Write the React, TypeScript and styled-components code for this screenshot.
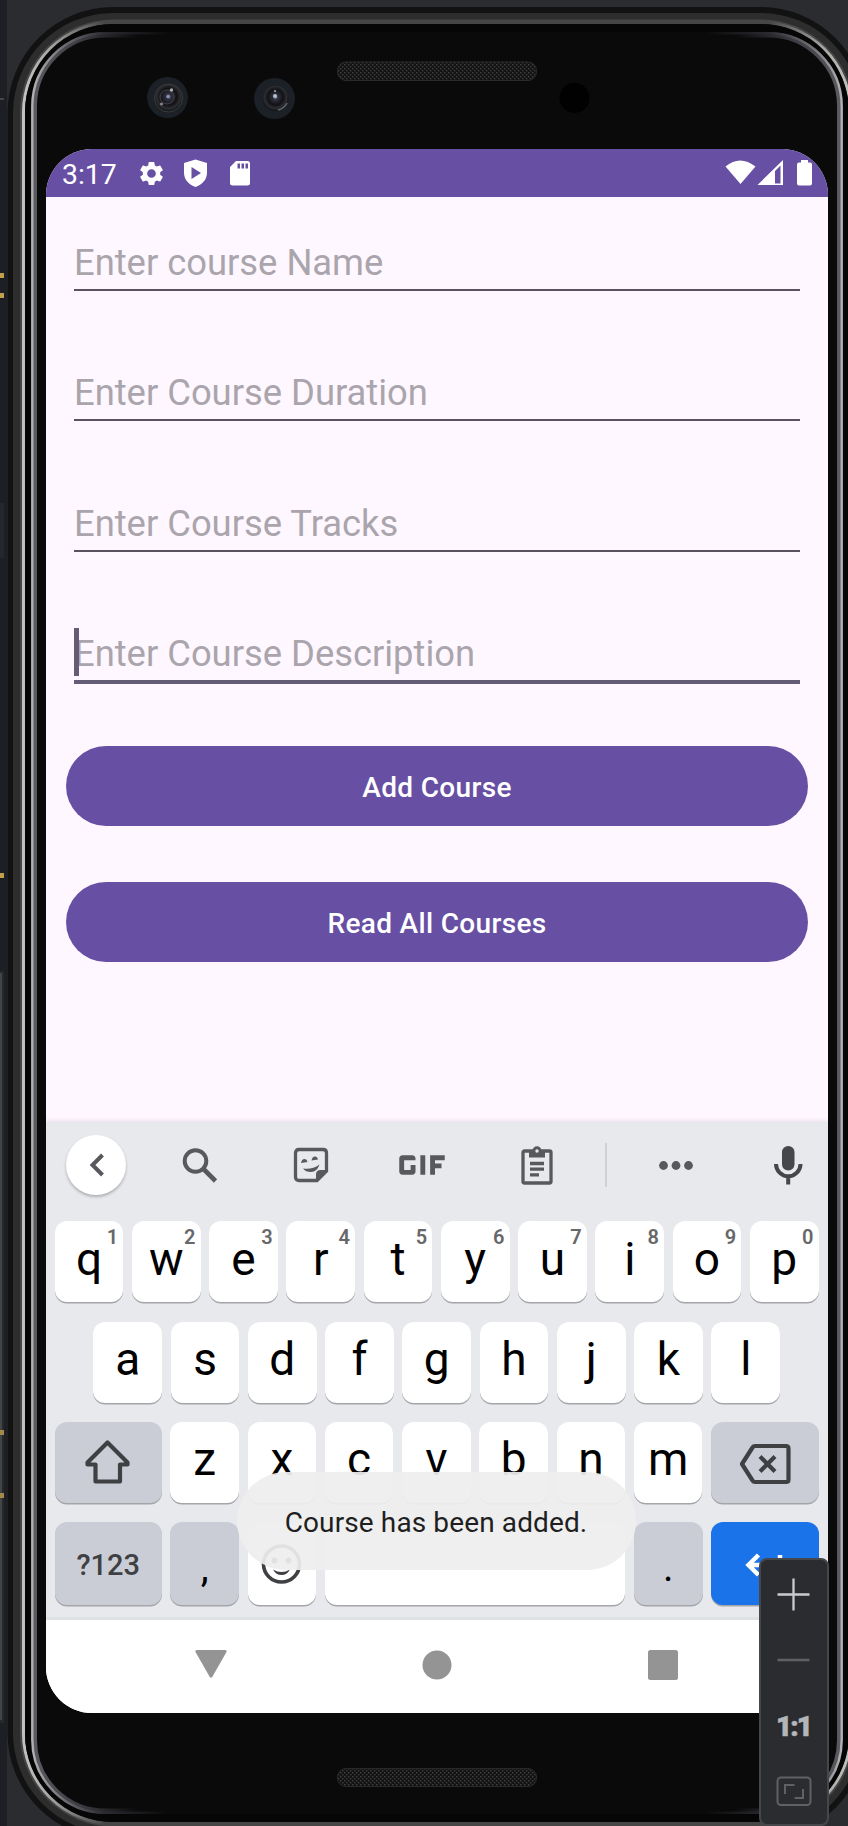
import React from "react";
import styled, { createGlobalStyle } from "styled-components";
import { MdGif, MdSettings } from "react-icons/md";

const GlobalStyle = createGlobalStyle`
  html, body { margin: 0; padding: 0; background: #2b2c30; }
  * { box-sizing: border-box; }
`;

const Stage = styled.div`
  position: relative;
  width: 848px;
  height: 1826px;
  overflow: hidden;
  background: #2b2c30;
  font-family: Roboto, "Liberation Sans", sans-serif;
  display: flex;
`;

const Gutter = styled.div`
  position: relative;
  width: 7px;
  flex: none;
  background: #1e1f24;
`;

const Mark = styled.i<{ $top: number; $height?: number; $color?: string; $width?: number }>`
  position: absolute;
  left: 0;
  top: ${(p) => p.$top}px;
  width: ${(p) => p.$width ?? 4}px;
  height: ${(p) => p.$height ?? 5}px;
  background: ${(p) => p.$color ?? "#c29f4a"};
`;

const BezelArt = styled.svg`
  position: absolute;
  left: 0;
  top: 0;
  display: block;
`;

const Screen = styled.main`
  position: relative;
  width: 782px;
  height: 1564px;
  margin: 149px 0 0 39px;
  flex: none;
  border-radius: 46px;
  overflow: hidden;
  background: #fef7ff;
  display: flex;
  flex-direction: column;
`;

const StatusBar = styled.header`
  height: 48px;
  flex: none;
  padding: 0 15px 0 16px;
  display: flex;
  align-items: center;
  justify-content: space-between;
  background: #674fa3;
  color: #fff;
`;

const StatusGroup = styled.div<{ $gap: number }>`
  display: flex;
  align-items: center;
  gap: ${(p) => p.$gap}px;
  svg { display: block; }
`;

const Clock = styled.span`
  font-size: 28.4px;
  line-height: 34px;
  width: 60px;
  margin-top: 3px;
`;

const Form = styled.section`
  flex: 1;
  padding: 44.5px 20px 0;
`;

const Field = styled.div<{ $focused?: boolean }>`
  position: relative;
  margin: 0 8px ${(p) => (p.$focused ? 62 : 81.5)}px;
  height: ${(p) => (p.$focused ? 51 : 49)}px;
  border-bottom: ${(p) => (p.$focused ? "4px solid #645b74" : "2px solid #5a535f")};
  font-size: 36.4px;
  line-height: 42px;
  letter-spacing: -0.02px;
  color: #aaa5ac;
  white-space: nowrap;
`;

const Caret = styled.i`
  position: absolute;
  left: 0;
  top: -5px;
  width: 5px;
  height: 48px;
  background: #645b74;
`;

const PillButton = styled.button`
  display: block;
  width: 742px;
  height: 80px;
  margin: 0 0 56px;
  padding: 4px 0 0;
  border: 0;
  border-radius: 40px;
  background: #674fa3;
  color: #fff;
  font: 500 28px/34px Roboto, "Liberation Sans", sans-serif;
  letter-spacing: 0.33px;
`;

const Keyboard = styled.section`
  height: 497.5px;
  flex: none;
  padding: 0 9px 0 8.7px;
  background: #e8e9ed;
  border-bottom: 3px solid #e0e1e4;
  box-shadow: 0 -1px 4px rgba(90, 60, 90, 0.14);
`;

const Suggestions = styled.div`
  display: grid;
  grid-template-columns: 100.5px 107px 114px 108px 122px 16px 125px 99px;
  height: 86px;
  margin: 0 -9px 13.3px -8.7px;
  align-items: center;
  justify-items: center;
  svg { display: block; }
`;

const RoundButton = styled.div`
  width: 60px;
  height: 60px;
  border-radius: 50%;
  background: #fff;
  box-shadow: 0 2px 3px rgba(0, 0, 0, 0.25);
  display: grid;
  place-items: center;
`;

const Divider = styled.i`
  width: 2px;
  height: 44px;
  background: #cfd1d5;
`;

const KeyRow = styled.div<{ $inset?: number; $tall?: boolean }>`
  display: flex;
  gap: 8.7px;
  height: ${(p) => (p.$tall ? 83.3 : 81)}px;
  margin-bottom: 19.3px;
  padding: 0 ${(p) => p.$inset ?? 0}px;
`;

const Key = styled.div<{ $width?: number; $tone?: "grey" | "blue"; $size?: number; $drop?: number }>`
  position: relative;
  width: ${(p) => p.$width ?? 68.57}px;
  flex: none;
  border-radius: 12px;
  display: flex;
  align-items: center;
  justify-content: center;
  padding-top: ${(p) => p.$drop ?? 0}px;
  background: ${(p) => (p.$tone === "grey" ? "#cbcdd6" : p.$tone === "blue" ? "#1a73e8" : "#fff")};
  box-shadow: 0 1.5px 0.5px #a5a6a9;
  font-size: ${(p) => p.$size ?? 46}px;
  line-height: 54px;
  color: #000;
  svg { display: block; }
`;

const Letter = styled.span`
  margin-top: -6px;
`;

const Hint = styled.sup`
  position: absolute;
  right: 5px;
  top: 3.5px;
  font-size: 20px;
  line-height: 24px;
  font-weight: 600;
  color: #67686a;
`;

const ModeLabel = styled.span`
  font-size: 29px;
  font-weight: 500;
  line-height: 34px;
  margin-top: 2px;
  color: #3f4043;
`;

const NavBar = styled.nav`
  height: 93.5px;
  flex: none;
  background: #fff;
  display: grid;
  grid-template-columns: 226px 226px 225px;
  align-items: center;
  justify-items: center;
  padding: 0 0 2px 52px;
`;

const Toast = styled.div`
  position: absolute;
  left: 190.5px;
  top: 1323px;
  width: 399px;
  height: 98px;
  border-radius: 49px;
  background: rgba(238, 238, 238, 0.93);
  display: flex;
  align-items: center;
  justify-content: center;
  padding-top: 3px;
  font-size: 28px;
  line-height: 34px;
  letter-spacing: 0.12px;
  white-space: nowrap;
  color: #1f1f1f;
`;

const ZoomPanel = styled.aside`
  position: absolute;
  left: 759px;
  top: 1558px;
  width: 70px;
  height: 268px;
  border: 2px solid #46474a;
  border-radius: 8px;
  background: #2b2c30;
  display: grid;
  grid-template-rows: 68px 64px 68px 62px;
  align-items: center;
  justify-items: center;
  padding-right: 1px;
  svg { display: block; }
`;

const Ratio = styled.span`
  font-size: 28px;
  line-height: 30px;
  font-weight: 900;
  letter-spacing: -2px;
  -webkit-text-stroke: 0.6px #b4b6ba;
  color: #b4b6ba;
  margin-top: 1px;
`;

function Bezel() {
  return (
    <BezelArt width="848" height="1826" viewBox="0 0 848 1826" fill="none">
      <defs>
        <linearGradient id="rim" gradientUnits="userSpaceOnUse" x1="22" x2="852" y1="0" y2="0">
          <stop offset="0" stopColor="#c4c3c0" />
          <stop offset="0.03" stopColor="#aaa9a6" />
          <stop offset="0.1" stopColor="#464646" />
          <stop offset="0.9" stopColor="#464646" />
          <stop offset="0.97" stopColor="#aaa9a6" />
          <stop offset="1" stopColor="#c4c3c0" />
        </linearGradient>
        <linearGradient id="glass" gradientUnits="userSpaceOnUse" x1="31" x2="843" y1="0" y2="0">
          <stop offset="0" stopColor="#b4b4b4" />
          <stop offset="0.035" stopColor="#77767a" />
          <stop offset="0.09" stopColor="#2c2b32" />
          <stop offset="0.17" stopColor="#0a0a0a" />
          <stop offset="0.83" stopColor="#0a0a0a" />
          <stop offset="0.91" stopColor="#2c2b32" />
          <stop offset="0.965" stopColor="#77767a" />
          <stop offset="1" stopColor="#b4b4b4" />
        </linearGradient>
        <linearGradient id="glassIn" gradientUnits="userSpaceOnUse" x1="33" x2="841" y1="0" y2="0">
          <stop offset="0" stopColor="#5b5b62" />
          <stop offset="0.06" stopColor="#3c3b42" />
          <stop offset="0.13" stopColor="#0a0a0a" />
          <stop offset="0.87" stopColor="#0a0a0a" />
          <stop offset="0.94" stopColor="#3c3b42" />
          <stop offset="1" stopColor="#5b5b62" />
        </linearGradient>
        <pattern id="mesh" width="4" height="4" patternUnits="userSpaceOnUse">
          <rect width="4" height="4" fill="#131313" />
          <rect width="1.400" height="1.400" fill="#424242" />
          <rect x="2" y="2" width="1.400" height="1.400" fill="#3c3c3c" />
        </pattern>
        <radialGradient id="lens" cx="0.5" cy="0.45" r="0.5">
          <stop offset="0" stopColor="#8088a8" />
          <stop offset="0.2" stopColor="#30303c" />
          <stop offset="0.6" stopColor="#111216" />
          <stop offset="0.85" stopColor="#2e2e31" />
          <stop offset="1" stopColor="#17191d" />
        </radialGradient>
      </defs>
      <rect x="7.5" y="7" width="859" height="1832" rx="106" fill="#121212" />
      <rect x="13" y="13" width="848" height="1820" rx="100" fill="#2d2d2d" />
      <rect x="20" y="19.500" width="834" height="1807" rx="93" fill="#464646" />
      <rect x="23.500" y="22.500" width="827" height="1801" rx="90" stroke="url(#rim)" strokeWidth="3" fill="#0a0a0a" />
      <rect x="25" y="24" width="824" height="1798" rx="88" fill="#060606" />
      <rect x="31" y="32" width="812" height="1782" rx="74" fill="#0a0a0a" />
      <rect x="34.500" y="35" width="805" height="1776" rx="71" stroke="url(#glassIn)" strokeWidth="5" />
      <rect x="32.300" y="33.300" width="809.400" height="1779.400" rx="73" stroke="url(#glass)" strokeWidth="2.400" />
      <rect x="337.500" y="62" width="199" height="18.500" rx="8.500" fill="url(#mesh)" stroke="#2a2a2a" />
      <rect x="337.500" y="1768.500" width="199" height="18" rx="8.500" fill="url(#mesh)" stroke="#2a2a2a" />
      <circle cx="167.500" cy="97.500" r="20.500" fill="#1b2126" />
      <circle cx="168.500" cy="98" r="14" fill="url(#lens)" stroke="#3b3b3d" />
      <circle cx="167" cy="97" r="7" stroke="#45454e" />
      <circle cx="171.500" cy="90" r="1.700" fill="#aaa" />
      <circle cx="168" cy="96.500" r="1.600" fill="#8d93bb" />
      <circle cx="161.500" cy="104" r="1.600" fill="#8b7d88" />
      <circle cx="274.500" cy="98.500" r="20.500" fill="#1b2126" />
      <circle cx="275.500" cy="98.500" r="13" fill="url(#lens)" />
      <circle cx="275" cy="96" r="2" fill="#b5c0d2" />
      <circle cx="275" cy="91" r="1.200" fill="#888" />
      <path d="M278 110a13 13 0 0 0 9-7" stroke="#66666a" strokeWidth="1.500" />
      <circle cx="574.500" cy="98" r="15" fill="#010102" />
    </BezelArt>
  );
}

const ink = "#58595c";

const fields = ["Enter course Name", "Enter Course Duration", "Enter Course Tracks"];

export default function App() {
  return (
    <>
      <GlobalStyle />
      <Stage>
        <Gutter>
          <Mark $top={98} $height={2} $color="#45464a" />
          <Mark $top={273} />
          <Mark $top={293} />
          <Mark $top={503} $height={55} $color="#26272c" />
          <Mark $top={873} />
          <Mark $top={971} $height={752} $color="#27282c" />
          <Mark $top={973} $height={747} $width={2} $color="#434446" />
          <Mark $top={1430} $color="#a3884a" />
          <Mark $top={1493} $color="#a3884a" />
        </Gutter>
        <Bezel />
        <Screen>
          <StatusBar>
            <StatusGroup $gap={15}>
              <Clock>3:17</Clock>
              <MdSettings size={29} />
              <svg width="29" height="30" viewBox="0 0 29 30">
                <path
                  fillRule="evenodd"
                  fill="#fff"
                  d="M14.5 1.5 26 5v10c0 6.500-4.800 11.500-11.500 14C7.800 26.500 3 21.500 3 15V5ZM10.500 9v12L20 15Z"
                />
              </svg>
              <svg width="29" height="30" viewBox="0 0 29 30">
                <path
                  fillRule="evenodd"
                  fill="#fff"
                  d="M11 3h11.500Q25 3 25 5.500v19.500Q25 27.500 22.500 27.500h-15Q5 27.500 5 25V9ZM12.500 5.500v5h2.500v-5ZM16.500 5.500v5h2.500v-5ZM20.500 5.500v5h2.500v-5Z"
                />
              </svg>
            </StatusGroup>
            <svg width="88" height="28" viewBox="0 0 88 28" fill="#fff">
              <path d="M0.500 7.500Q15 -4.500 30.500 7.500L15.500 25Z" />
              <path fillRule="evenodd" d="M58 1v25H32.500ZM50 12v12.500h5.500V6.500Z" />
              <path d="M76 1h7v2.500h2q2 0 2 2v19q0 2-2 2h-11q-2 0-2-2v-19q0-2 2-2h2Z" />
            </svg>
          </StatusBar>

          <Form>
            {fields.map((label) => (
              <Field key={label}>{label}</Field>
            ))}
            <Field $focused>
              <Caret />
              Enter Course Description
            </Field>
            <PillButton>Add Course</PillButton>
            <PillButton>Read All Courses</PillButton>
          </Form>

          <Keyboard>
            <Suggestions>
              <RoundButton>
                <svg width="20" height="26" viewBox="0 0 20 26" fill="none" stroke={ink} strokeWidth="4">
                  <path d="M16.500 3 6.500 13l10 10" />
                </svg>
              </RoundButton>
              <svg width="36" height="36" viewBox="0 0 36 36" fill="none" stroke={ink} strokeWidth="4">
                <circle cx="13.500" cy="14" r="10.800" />
                <path d="m21.500 22 12 12" strokeWidth="4.600" />
              </svg>
              <svg width="36" height="36" viewBox="0 0 36 36" fill="none" stroke={ink} strokeWidth="3.300">
                <path d="M6 2.500h24q3.500 0 3.500 3.500v18L24 33.500H6q-3.500 0-3.500-3.500V6q0-3.500 3.500-3.500Z" />
                <path d="M23 34v-6.500q0-4.500 4.500-4.500H34L23 34Z" fill={ink} stroke="none" />
                <path d="M10 21.500q9 1.500 16.500-4Q24 25 18 25q-5.500 0-8-3.500Z" fill={ink} stroke="none" />
                <path d="M8 16q.8-4 3.500-4 2.300 0 3 3ZM18.500 13.500q.8-4 3.500-4 2.300 0 3 3Z" fill={ink} stroke="none" />
              </svg>
              <MdGif size={78} color={ink} aria-label="GIF" />
              <svg width="32" height="40" viewBox="0 0 32 40" fill="none" stroke={ink} strokeWidth="3.300">
                <rect x="2" y="6" width="28" height="32" rx="1.500" />
                <path d="M8 6h4.500a4 4 0 0 1 7 0H24v6.500H8Z" fill={ink} stroke="none" />
                <circle cx="16" cy="6" r="3.200" fill="#e8e9ed" strokeWidth="3" />
                <path d="M9 18.500h14M9 24.200h14M9 29.900h9" />
              </svg>
              <Divider />
              <svg width="36" height="10" viewBox="0 0 36 10" fill={ink}>
                <circle cx="5.500" cy="5.500" r="4.400" />
                <circle cx="18" cy="5.500" r="4.400" />
                <circle cx="30.500" cy="5.500" r="4.400" />
              </svg>
              <svg width="30" height="40" viewBox="0 0 30 40" fill="none" stroke="#46474a" strokeWidth="4">
                <rect x="9" y="1" width="12.500" height="24.500" rx="6.200" fill="#46474a" stroke="none" />
                <path d="M3 19a12.200 12.200 0 0 0 24.500 0M15.200 31v8.500" />
              </svg>
            </Suggestions>

            <KeyRow>
              {"qwertyuiop".split("").map((c, i) => (
                <Key key={c}>
                  <Letter>{c}</Letter>
                  <Hint>{(i + 1) % 10}</Hint>
                </Key>
              ))}
            </KeyRow>
            <KeyRow $inset={38.8}>
              {"asdfghjkl".split("").map((c) => (
                <Key key={c}>
                  <Letter>{c}</Letter>
                </Key>
              ))}
            </KeyRow>
            <KeyRow>
              <Key $width={107} $tone="grey">
                <svg width="46" height="44" viewBox="0 0 46 44" fill="none" stroke="#3f4043" strokeWidth="4.200" strokeLinejoin="round">
                  <path d="M22.500 2.500 42.500 22.500v2H35v17H10.500v-17h-8v-2Z" />
                </svg>
              </Key>
              {"zxcvbnm".split("").map((c) => (
                <Key key={c}>
                  <Letter>{c}</Letter>
                </Key>
              ))}
              <Key $width={107.5} $tone="grey" $drop={3}>
                <svg width="52" height="42" viewBox="0 0 52 42" fill="none" stroke="#3f4043" strokeWidth="4.200" strokeLinejoin="round">
                  <path d="M16 3h31q2.500 0 2.500 2.500v31Q49.500 39 47 39H16q-1.500 0-2.500-1.500L3 21 13.500 4.500Q14.500 3 16 3Z" />
                  <path d="m21 13.500 15 15m0-15-15 15" />
                </svg>
              </Key>
            </KeyRow>
            <KeyRow $tall>
              <Key $width={107} $tone="grey">
                <ModeLabel>?123</ModeLabel>
              </Key>
              <Key $tone="grey" $size={40} $drop={9}>,</Key>
              <Key>
                <svg width="42" height="42" viewBox="0 0 42 42" fill="none" stroke="#3f4043" strokeWidth="3.600">
                  <circle cx="20.500" cy="21" r="18" />
                  <circle cx="13.500" cy="17.500" r="3" fill="#3f4043" stroke="none" />
                  <circle cx="27.500" cy="17.500" r="3" fill="#3f4043" stroke="none" />
                  <path d="M12 26.500q8.500 5 17 0-3 5.500-8.500 5.500t-8.500-5.500Z" fill="#3f4043" stroke="none" />
                </svg>
              </Key>
              <Key $width={300.5} />
              <Key $tone="grey" $size={40} $drop={9}>.</Key>
              <Key $width={107.5} $tone="blue" $drop={2}>
                <svg width="42" height="30" viewBox="0 0 42 30" fill="none" stroke="#fff" strokeWidth="4.500">
                  <path d="M14.500 5 4.500 15l10 10M5 15h31V5" />
                </svg>
              </Key>
            </KeyRow>
          </Keyboard>

          <NavBar>
            <svg width="34" height="32" viewBox="0 0 34 32" fill="#949494">
              <path d="M3 1h28q2.500 0 1.200 2.500L18.500 27.500q-1.500 2.500-3 0L1.800 3.500Q.5 1 3 1Z" />
            </svg>
            <svg width="30" height="30" viewBox="0 0 30 30" fill="#949494">
              <circle cx="15" cy="15" r="14.500" />
            </svg>
            <svg width="30" height="30" viewBox="0 0 30 30" fill="#949494">
              <rect width="30" height="30" rx="2.500" />
            </svg>
          </NavBar>
          <Toast>Course has been added.</Toast>
        </Screen>

        <ZoomPanel>
          <svg width="33" height="33" viewBox="0 0 33 33" stroke="#c9cbcf" strokeWidth="2.300">
            <path d="M0.500 16.500h32M16.500.5v32" />
          </svg>
          <svg width="33" height="4" viewBox="0 0 33 4" stroke="#5f6164" strokeWidth="2.300">
            <path d="M0.500 2h32" />
          </svg>
          <Ratio>1:1</Ratio>
          <svg width="36" height="30" viewBox="0 0 36 30" fill="none" stroke="#5f6164" strokeWidth="2">
            <rect x="1.500" y="1.500" width="33" height="27.500" rx="3.500" />
            <path d="M9 18V9h9.500M18.500 22H27v-9" />
          </svg>
        </ZoomPanel>
      </Stage>
    </>
  );
}
